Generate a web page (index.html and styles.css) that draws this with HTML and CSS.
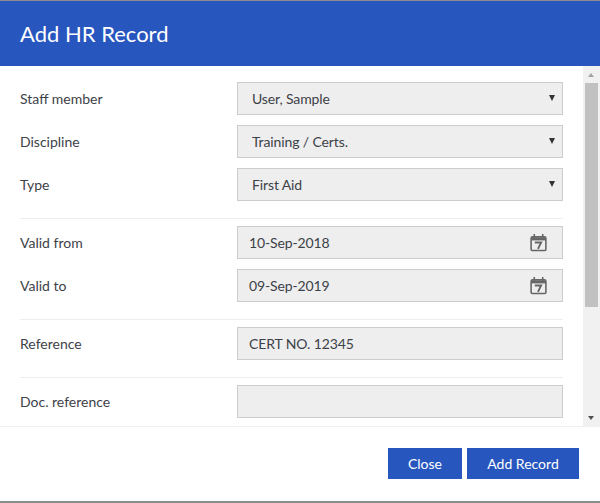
FILE: index.html
```html
<!DOCTYPE html>
<html lang="en">
<head>
    <meta charset="UTF-8">
    <title>Add HR Record</title>
    <link rel="stylesheet" href="styles.css">
</head>
<body>
    <div class="modal">
        <div class="modal-header">Add HR Record</div>

        <div class="modal-body">
            <div class="form-scroll">
                <div class="form-group">
                    <div class="form-row">
                        <label class="form-label">Staff member</label>
                        <div class="field">
                            <select class="form-input select-input"><option>User, Sample</option></select>
                            <span class="select-arrow"></span>
                        </div>
                    </div>
                    <div class="form-row">
                        <label class="form-label">Discipline</label>
                        <div class="field">
                            <select class="form-input select-input"><option>Training / Certs.</option></select>
                            <span class="select-arrow"></span>
                        </div>
                    </div>
                    <div class="form-row">
                        <label class="form-label">Type</label>
                        <div class="field">
                            <select class="form-input select-input"><option>First Aid</option></select>
                            <span class="select-arrow"></span>
                        </div>
                    </div>
                </div>

                <div class="form-group">
                    <div class="form-row">
                        <label class="form-label">Valid from</label>
                        <div class="field">
                            <input class="form-input" type="text" value="10-Sep-2018">
                            <svg class="calendar-icon" viewBox="0 0 18 18">
                                <path class="cal-line" d="M3.5 3.5h11a1.5 1.5 0 0 1 1.5 1.5v10.5a1 1 0 0 1-1 1H3a1 1 0 0 1-1-1V5a1.5 1.5 0 0 1 1.5-1.5z"/>
                                <path class="cal-bar" d="M2 4h14v3H2z"/>
                                <path class="cal-line" d="M5 1v3.5M13 1v3.5"/>
                                <path class="cal-seven" d="M5.5 9h6l-3 6"/>
                            </svg>
                        </div>
                    </div>
                    <div class="form-row">
                        <label class="form-label">Valid to</label>
                        <div class="field">
                            <input class="form-input" type="text" value="09-Sep-2019">
                            <svg class="calendar-icon" viewBox="0 0 18 18">
                                <path class="cal-line" d="M3.5 3.5h11a1.5 1.5 0 0 1 1.5 1.5v10.5a1 1 0 0 1-1 1H3a1 1 0 0 1-1-1V5a1.5 1.5 0 0 1 1.5-1.5z"/>
                                <path class="cal-bar" d="M2 4h14v3H2z"/>
                                <path class="cal-line" d="M5 1v3.5M13 1v3.5"/>
                                <path class="cal-seven" d="M5.5 9h6l-3 6"/>
                            </svg>
                        </div>
                    </div>
                </div>

                <div class="form-group">
                    <div class="form-row">
                        <label class="form-label">Reference</label>
                        <div class="field">
                            <input class="form-input" type="text" value="CERT NO. 12345">
                        </div>
                    </div>
                </div>

                <div class="form-group">
                    <div class="form-row">
                        <label class="form-label">Doc. reference</label>
                        <div class="field">
                            <input class="form-input" type="text">
                        </div>
                    </div>
                </div>
            </div>

            <div class="scrollbar">
                <span class="scroll-up"></span>
                <div class="scroll-track"><div class="scroll-thumb"></div></div>
                <span class="scroll-down"></span>
            </div>
        </div>

        <div class="modal-footer">
            <button class="btn">Close</button>
            <button class="btn btn-wide">Add Record</button>
        </div>
    </div>
</body>
</html>
```

FILE: styles.css
```css
html, body {
    margin: 0;
    padding: 0;
    height: 503px;
    overflow: hidden;
}

body {
    font-family: Lato, sans-serif;
    color: #3d4148;
    background: #fff;
}

.modal {
    height: 503px;
    box-sizing: border-box;
    display: flex;
    flex-direction: column;
    border-top: 1px solid #8c8c8c;
    border-bottom: 2px solid #8c8c8c;
}

/* Шапка */
.modal-header {
    height: 65px;
    flex: none;
    box-sizing: border-box;
    padding-left: 20px;
    line-height: 65px;
    font-size: 22px;
    color: #fff;
    background: #2856bf;
}

/* Форма со скроллом */
.modal-body {
    height: 361px;
    flex: none;
    display: flex;
    overflow: hidden;
    border-bottom: 1px solid #f0f0f0;
    box-sizing: border-box;
}

.form-scroll {
    flex: 1;
    padding: 16px 20px 0 20px;
    overflow: hidden;
}

.form-group {
    display: flex;
    flex-direction: column;
    gap: 10px;
    padding-bottom: 17px;
    margin-bottom: 7px;
    border-bottom: 1px solid #eee;
}

.form-group:last-child {
    border-bottom: none;
}

.form-row {
    display: flex;
    align-items: center;
    height: 33px;
}

.form-label {
    width: 217px;
    flex: none;
    font-size: 14px;
}

.field {
    position: relative;
    flex: 1;
    height: 33px;
}

.form-input {
    display: block;
    width: 100%;
    height: 33px;
    box-sizing: border-box;
    margin: 0;
    padding: 0 11px;
    font-family: Lato, sans-serif;
    font-size: 14px;
    letter-spacing: -0.12px;
    color: #3d4148;
    background: #eee;
    border: 1px solid #ccc;
    border-radius: 0;
    outline: none;
}

.select-input {
    appearance: none;
    padding-left: 14px;
}

.select-arrow {
    position: absolute;
    top: 13px;
    right: 8px;
    width: 0;
    height: 0;
    border-left: 3px solid transparent;
    border-right: 3px solid transparent;
    border-top: 6px solid #333;
}

.calendar-icon {
    position: absolute;
    top: 7px;
    right: 15px;
    width: 19px;
    height: 19px;
}

.cal-line {
    fill: none;
    stroke: #666;
    stroke-width: 1.5;
}

.cal-bar {
    fill: #666;
}

.cal-seven {
    fill: none;
    stroke: #666;
    stroke-width: 1.8;
}

/* Скроллбар */
.scrollbar {
    width: 17px;
    flex: none;
    display: flex;
    flex-direction: column;
    background: #f1f1f1;
}

.scroll-up,
.scroll-down {
    flex: none;
    height: 17px;
    position: relative;
}

.scroll-up::after,
.scroll-down::after {
    content: "";
    position: absolute;
    left: 5px;
    top: 7px;
    width: 0;
    height: 0;
    border-left: 3.5px solid transparent;
    border-right: 3.5px solid transparent;
}

.scroll-up::after {
    border-bottom: 4px solid #a3a3a3;
}

.scroll-down::after {
    border-top: 4px solid #505050;
}

.scroll-track {
    flex: 1;
}

.scroll-thumb {
    height: 224px;
    margin: 0 2px;
    background: #c1c1c1;
}

/* Кнопки */
.modal-footer {
    flex: 1;
    display: flex;
    justify-content: flex-end;
    align-items: flex-start;
    gap: 5px;
    padding: 21px 21px 0 0;
}

.btn {
    width: 74px;
    height: 31px;
    padding: 0;
    font-family: Lato, sans-serif;
    font-size: 14px;
    color: #fff;
    background: #2856bf;
    border: none;
    cursor: pointer;
}

.btn-wide {
    width: 112px;
}
```
